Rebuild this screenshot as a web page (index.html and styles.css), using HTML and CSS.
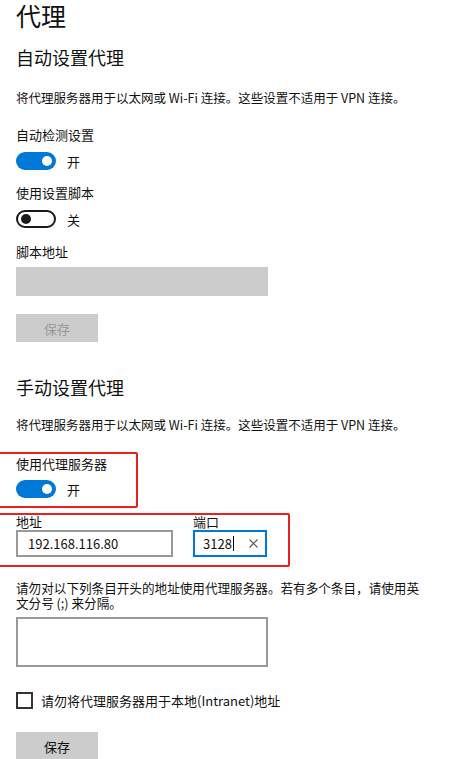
FILE: index.html
```html
<!DOCTYPE HTML>
<html lang="zh-CN">
  <head>
    <title>代理</title>
    <meta charset="utf-8">
    <link rel="stylesheet" href="styles.css">
  </head>
  <body>

  <h1 class="page-title">代理</h1>

  <h2 class="section-title">自动设置代理</h2>
  <p class="desc">将代理服务器用于以太网或 Wi-Fi 连接。这些设置不适用于 VPN 连接。</p>

  <div class="label label-first">自动检测设置</div>
  <div class="toggle-row">
    <span class="toggle on"><span class="knob"></span></span>
    <span class="toggle-text">开</span>
  </div>

  <div class="label">使用设置脚本</div>
  <div class="toggle-row">
    <span class="toggle off"><span class="knob"></span></span>
    <span class="toggle-text">关</span>
  </div>

  <div class="label label-script">脚本地址</div>
  <div class="script-input"></div>
  <button class="btn disabled">保存</button>

  <h2 class="section-title manual">手动设置代理</h2>
  <p class="desc desc-manual">将代理服务器用于以太网或 Wi-Fi 连接。这些设置不适用于 VPN 连接。</p>

  <div class="mark mark-toggle">
    <div class="label">使用代理服务器</div>
    <div class="toggle-row">
      <span class="toggle on"><span class="knob"></span></span>
      <span class="toggle-text">开</span>
    </div>
  </div>

  <div class="mark mark-fields">
    <div class="field field-addr">
      <div class="field-label">地址</div>
      <div class="input">192.168.116.80</div>
    </div>
    <div class="field field-port">
      <div class="field-label">端口</div>
      <div class="input focus">
        <span>3128</span><span class="caret"></span>
        <svg class="clear" width="9" height="9" viewBox="0 0 9 9"><path d="M0.5 0.5 L8.5 8.5 M8.5 0.5 L0.5 8.5" stroke="#555" stroke-width="1.1" fill="none"/></svg>
      </div>
    </div>
  </div>

  <p class="desc exceptions">请勿对以下列条目开头的地址使用代理服务器。若有多个条目，请使用英文分号 (;) 来分隔。</p>
  <div class="textarea"></div>

  <div class="check-row">
    <span class="checkbox"></span>
    <span class="check-text">请勿将代理服务器用于本地(Intranet)地址</span>
  </div>

  <button class="btn save">保存</button>

  </body>
</html>
```

FILE: styles.css
```css
html {
  height: 100%;
}
body {
  margin: 0;
  padding: 0 16px;
  background: #ffffff;
  color: #111111;
  font-family: "Noto Sans CJK SC", "Noto Sans", sans-serif;
  font-size: 13px;
  overflow: hidden;
}

.page-title {
  margin: 0;
  font-size: 25px;
  font-weight: normal;
  line-height: 30px;
}

.section-title {
  margin: 15px 0 0;
  font-size: 18px;
  font-weight: normal;
  line-height: 24px;
}
.section-title.manual {
  margin-top: 33px;
}

.desc {
  margin: 20px 0 0;
  font-size: 12.5px;
  line-height: 18px;
}
.desc-manual {
  margin-top: 17px;
}

.label {
  margin-top: 13px;
  line-height: 18px;
}
.label-first {
  margin-top: 19px;
}
.label-script {
  margin-top: 14px;
}

.toggle-row {
  display: flex;
  align-items: center;
  height: 20px;
  margin-top: 7px;
}
.toggle {
  box-sizing: border-box;
  width: 40px;
  height: 18px;
  border-radius: 9px;
  display: flex;
  align-items: center;
  padding: 0 4px;
}
.toggle .knob {
  width: 10px;
  height: 10px;
  border-radius: 50%;
}
.toggle.on {
  background: #0078d7;
  justify-content: flex-end;
}
.toggle.on .knob {
  background: #ffffff;
}
.toggle.off {
  border: 2px solid #1a1a1a;
  padding: 0 3px;
}
.toggle.off .knob {
  background: #1a1a1a;
}
.toggle-text {
  margin-left: 11px;
}

.script-input {
  width: 252px;
  height: 29px;
  margin-top: 6px;
  background: #cccccc;
}

.btn {
  display: block;
  width: 82px;
  height: 28px;
  border: 0;
  padding: 0;
  background: #cccccc;
  font: 13px "Noto Sans CJK SC", sans-serif;
  color: #111111;
}
.btn.disabled {
  margin-top: 18px;
  color: #9a9a9a;
}
.btn.save {
  margin-top: 22px;
}

/* red annotation boxes */
.mark {
  border: 2px solid #e8201e;
  border-radius: 2px;
  margin-left: -20px;
  padding-left: 18px;
}
.mark-toggle {
  width: 120px;
  margin-top: 18px;
  padding-top: 1px;
  padding-bottom: 7px;
}
.mark-toggle .label {
  margin-top: 0;
}
.mark-toggle .toggle-row {
  margin-top: 6px;
}
.mark-fields {
  width: 272px;
  margin-top: 5px;
  display: flex;
  gap: 20px;
  padding-bottom: 8px;
}
.field-label {
  line-height: 14px;
  margin-bottom: 1px;
}
.input {
  box-sizing: border-box;
  height: 27px;
  border: 2px solid #999999;
  display: flex;
  align-items: center;
  padding-left: 10px;
  font-size: 13px;
}
.field-addr .input {
  width: 157px;
}
.input.focus {
  width: 74px;
  border-color: #0078d7;
  padding-left: 8px;
}
.caret {
  width: 1px;
  height: 15px;
  background: #000000;
  margin-left: 1px;
}
.clear {
  margin-left: auto;
  margin-right: 7px;
}

.exceptions {
  margin-top: 13px;
  max-width: 410px;
  font-size: 12.6px;
  line-height: 15px;
}

.textarea {
  box-sizing: border-box;
  width: 252px;
  height: 50px;
  margin-top: 7px;
  border: 2px solid #999999;
}

.check-row {
  display: flex;
  align-items: center;
  height: 20px;
  margin-top: 23px;
}
.checkbox {
  box-sizing: border-box;
  width: 17px;
  height: 17px;
  border: 2px solid #333333;
}
.check-text {
  margin-left: 8px;
}
```
